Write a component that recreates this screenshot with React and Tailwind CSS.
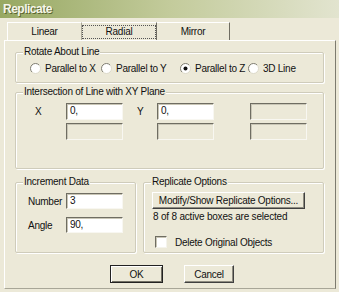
import React from 'react';

function Radio({ on }) {
  return (
    <svg width="11" height="11" viewBox="0 0 11 11" className="shrink-0">
      <circle cx="5.5" cy="5.5" r="5" fill="#fff" />
      <path d="M1.96 9.04 A5 5 0 0 1 9.04 1.96" fill="none" stroke="#7d7b70" strokeWidth="1" />
      <path d="M9.04 1.96 A5 5 0 0 1 1.96 9.04" fill="none" stroke="#dcd9ca" strokeWidth="1" />
      {on && <circle cx="5.5" cy="5.5" r="2" fill="#111" />}
    </svg>
  );
}

function Field({ value, disabled, h = 'h-[17px]' }) {
  return (
    <div
      className={`w-[57px] ${h} border-t border-l border-t-[#6f6d62] border-l-[#6f6d62] border-b border-r border-b-[#f8f7f1] border-r-[#f8f7f1] shadow-[inset_1px_1px_0_#c9c6b6] pl-[3px] leading-[14px] ${
        disabled ? 'bg-[#ece9d8]' : 'bg-white'
      }`}
    >
      {value}
    </div>
  );
}

function Group({ label, className, children }) {
  return (
    <div className={`relative border border-[#cfccbb] rounded-[2px] shadow-[inset_1px_1px_0_#fff,1px_1px_0_#fff] ${className}`}>
      <span className="absolute -top-[7px] left-[7px] px-[1px] bg-[#ece9d8] leading-[12px]">{label}</span>
      {children}
    </div>
  );
}

export default function App() {
  return (
    <div className="w-[339px] h-[292px] overflow-hidden bg-[#ece9d8] text-[10px] tracking-[-0.25px] text-[#111] font-['Liberation_Sans',Arial,sans-serif]">
      <div className="h-[18px] bg-linear-to-r from-[#97a862] via-[#c3cb9b] to-[#e2e4cf] pl-[3px] flex items-center">
        <span className="text-[12px] font-bold tracking-[-0.5px] text-[#f6f6ea] [text-shadow:1px_1px_0_#5a6530]">Replicate</span>
      </div>

      <div className="mt-[4px] pl-[7px] flex h-[18px]">
        <div className="w-[75px] border-t border-l border-white border-r border-r-[#a9a797] flex items-center justify-center">
          Linear
        </div>
        <div className="w-[75px] border-t border-white border-r border-r-[#6f6d62] flex items-center">
          <div className="w-full h-[14px] border border-dotted border-[#555] flex items-center justify-center">Radial</div>
        </div>
        <div className="w-[73px] border-t border-white border-r border-r-[#6f6d62] flex items-center justify-center">
          Mirror
        </div>
      </div>

      <div className="ml-[4px] w-[332px] h-[249px] border-t border-l border-white border-r border-b border-r-[#7d7b6f] border-b-[#a8a697] pl-[10px] pt-[11px] flex flex-col">
        <Group label="Rotate About Line" className="w-[309px] h-[31px]">
          <div className="pt-[10px] pl-[14px] flex items-center h-[21px]">
            <div className="w-[71px] flex items-center gap-[4px]">
              <Radio />
              <span>Parallel to X</span>
            </div>
            <div className="w-[79px] flex items-center gap-[4px]">
              <Radio />
              <span>Parallel to Y</span>
            </div>
            <div className="w-[68px] flex items-center gap-[4px]">
              <Radio on />
              <span>Parallel to Z</span>
            </div>
            <div className="flex items-center gap-[4px]">
              <Radio />
              <span>3D Line</span>
            </div>
          </div>
        </Group>

        <Group label="Intersection of Line with XY Plane" className="mt-[9px] w-[309px] h-[77px]">
          <div className="pt-[10px] flex flex-col gap-[3px]">
            <div className="flex items-center h-[17px]">
              <span className="w-[50px] pl-[19px]">X</span>
              <Field value="0," />
              <span className="w-[34px] pl-[14px]">Y</span>
              <Field value="0," />
              <span className="w-[36px]" />
              <Field disabled />
            </div>
            <div className="flex items-center h-[17px]">
              <span className="w-[50px]" />
              <Field disabled />
              <span className="w-[34px]" />
              <Field disabled />
              <span className="w-[36px]" />
              <Field disabled />
            </div>
          </div>
        </Group>

        <div className="mt-[13px] flex gap-[7px]">
          <Group label="Increment Data" className="w-[121px] h-[71px]">
            <div className="pt-[10px] flex flex-col gap-[8px]">
              <div className="flex items-center h-[16px]">
                <span className="w-[50px] pl-[12px]">Number</span>
                <Field value="3" h="h-[16px]" />
              </div>
              <div className="flex items-center h-[16px]">
                <span className="w-[50px] pl-[12px]">Angle</span>
                <Field value="90," h="h-[16px]" />
              </div>
            </div>
          </Group>

          <Group label="Replicate Options" className="w-[181px] h-[71px]">
            <div className="pt-[9px] pl-[8px] flex flex-col">
              <button className="w-[153px] h-[17px] bg-[#ece9d8] border border-t-white border-l-white border-r-[#404040] border-b-[#404040] shadow-[inset_-1px_-1px_0_#8e8c80] leading-[14px]">
                Modify/Show Replicate Options...
              </button>
              <span className="mt-[2px] pl-[1px] leading-[12px] tracking-[-0.2px]">8 of 8 active boxes are selected</span>
              <div className="mt-[13px] pl-[3px] flex items-center gap-[8px] h-[12px]">
                <span className="w-[12px] h-[12px] bg-white border border-t-[#6f6d62] border-l-[#6f6d62] border-r-[#f4f3ec] border-b-[#f4f3ec] shadow-[inset_1px_1px_0_#c9c6b6]" />
                <span>Delete Original Objects</span>
              </div>
            </div>
          </Group>
        </div>

        <div className="mt-[12px] pl-[95px] flex gap-[21px]">
          <button className="w-[53px] h-[18px] bg-[#ece9d8] border border-[#222] shadow-[inset_1px_1px_0_#fff,inset_-1px_-1px_0_#716f64]">
            OK
          </button>
          <button className="w-[50px] h-[18px] bg-[#ece9d8] border border-t-white border-l-white border-r-[#404040] border-b-[#404040] shadow-[inset_-1px_-1px_0_#8e8c80]">
            Cancel
          </button>
        </div>
      </div>
    </div>
  );
}
